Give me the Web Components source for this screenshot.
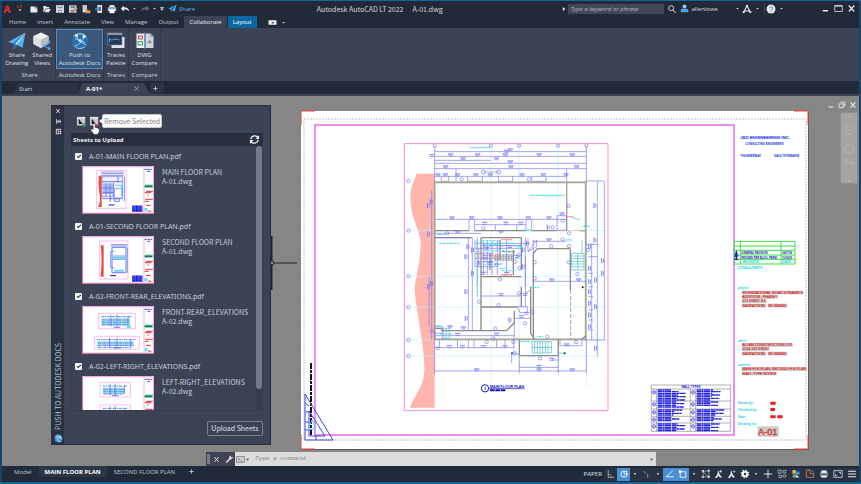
<!DOCTYPE html>
<html lang="en">
<head>
<meta charset="utf-8">
<title>Autodesk AutoCAD LT 2022</title>
<style>
  body { margin: 0; background: #212a38; color: #d3d7de; font: 6px/8px "Open Sans", "Noto Sans", sans-serif; }
</style>
</head>
<body>
<cad-app></cad-app>
<script>
const BASE = `
  :host { display: block; box-sizing: border-box; }
  *, *::before { box-sizing: border-box; }
  button { font: inherit; color: inherit; background: none; border: 0; padding: 0; margin: 0; display: flex; align-items: center; justify-content: center; white-space: nowrap; }
  svg { display: block; flex: none; }
`;
const define = (name, markup) => customElements.define(name, class extends HTMLElement {
  constructor() {
    super();
    this.attachShadow({ mode: "open" });
  }
  connectedCallback() {
    if (this.shadowRoot.childNodes.length) return;
    const t = document.createElement("template");
    t.innerHTML = `<style>${BASE}</style>` + (typeof markup === "function" ? markup(this) : markup);
    this.shadowRoot.append(t.content.cloneNode(true));
  }
});

/* ---------- icons: every one is drawn on a 36-unit square ---------- */
const W = "#e6e9ee";
const ICONS = {
  logo: `<path d="M2 32 11 5h8l9 27h-7l-2-6h-9l-2 6zM12 20h6l-3-9z" fill="#d9302c"/><path d="M15 20 28 12" stroke="#d9302c" stroke-width="2"/>`,
  lt: `<path d="M6 6v9h7M15 6h9M20 6v10" stroke="#d9302c" stroke-width="3" fill="none"/><path d="M10 22h12l-6 7z" fill="${W}"/>`,
  new: `<path d="M5 9h16v6h9v16H5z" fill="${W}"/><path d="M23 7l8 7h-8z" fill="#b9bec7"/>`,
  open: `<path d="M5 7h9l3 4h9v5H14L7 29H5z" fill="${W}"/><path d="M15 18h17l-7 12H9z" fill="${W}"/>`,
  save: `<path d="M4 4h28v28H4z" fill="${W}"/><path d="M9 5h17v10H9zM10 21h15v11H10z" fill="#7d8592"/><path d="M12 6h10v5H12zM13 24h10v6H13z" fill="#eef1f5"/>`,
  saveas: `<path d="M4 5h26v26H4z" fill="${W}"/><path d="M9 6h16v9H9zM9 21h11v10H9z" fill="#7d8592"/><path d="M17 30l2-8 11-11 5 5-11 11z" fill="#e5a26b" stroke="#333" stroke-width="1"/>`,
  cloudopen: `<path d="M6 4h15v26H6z" fill="${W}"/><path d="M10 9h7M10 14h7M10 19h7" stroke="#6d7482" stroke-width="2"/><path d="M16 20h8l3 3h7v10H16z" fill="#d39a5b"/>`,
  web: `<path d="M12 4h17v28H12z" fill="${W}"/><path d="M16 10h9v15h-9z" fill="#57606f"/><path d="M4 15h8v-5l9 8-9 8v-5H4z" fill="#3d9fe0"/>`,
  print: `<path d="M9 4h18v8H9z" fill="${W}"/><path d="M3 12h30v14H3z" fill="#cfd3da"/><path d="M9 20h18v13H9z" fill="#fff"/><path d="M3 14h30v4H3z" fill="#7cb4e0"/>`,
  undo: `<path d="M3 16 14 6v6c12 0 18 4 19 15-5-6-9-7-19-7v7z" fill="${W}"/>`,
  redo: `<path d="M33 16 22 6v6C10 12 4 16 3 27c5-6 9-7 19-7v7z" fill="#5f6877"/>`,
  dd: `<path d="M12 15h12l-6 8z" fill="${W}"/>`,
  ddbar: `<path d="M10 9h16v3H10zM10 16h16l-8 10z" fill="${W}"/>`,
  send: `<path d="M2 18 34 3 27 31 17 24l-5 8-1-11z" fill="#4aa8ee"/><path d="M11 21 34 3 17 24z" fill="#1c4f7d"/>`,
  tri: `<path d="M13 9v18l11-9z" fill="${W}"/>`,
  search: `<circle cx="15" cy="15" r="9" fill="none" stroke="${W}" stroke-width="3"/><path d="M21 22l11 10" stroke="#d6b37c" stroke-width="4"/>`,
  user: `<circle cx="18" cy="10" r="8" fill="#8cc8f4"/><path d="M3 33v-8q0-5 6-6h18q6 1 6 6v8z" fill="#4ba3e3"/>`,
  appstore: `<path d="M18 6 6 30M18 6l12 24M10 25h16" stroke="${W}" stroke-width="4" fill="none"/><circle cx="18" cy="7" r="4" fill="${W}"/><circle cx="6" cy="29" r="4" fill="${W}"/><circle cx="30" cy="29" r="4" fill="${W}"/>`,
  help: `<circle cx="18" cy="18" r="16" fill="#e8eaee"/><path d="M13 15c0-7 11-7 11 0 0 4-6 4-6 8M18 25v4" stroke="#8b919c" stroke-width="4" fill="none"/>`,
  min: `<path d="M7 24h21v6H7z" fill="${W}"/>`,
  max: `<path d="M3 6h30v24H3z" fill="none" stroke="${W}" stroke-width="3"/><path d="M3 6h30v4H3z" fill="${W}"/>`,
  restore: `<path d="M11 5h20v17h-6" fill="none" stroke="${W}" stroke-width="4"/><path d="M5 13h19v17H5z" fill="none" stroke="${W}" stroke-width="4"/>`,
  close: `<path d="M7 6l22 24M29 6 7 30" stroke="${W}" stroke-width="5"/>`,
  xthin: `<path d="M8 8l20 20M28 8 8 28" stroke="#b3b9c3" stroke-width="4"/>`,
  plus: `<path d="M18 6v24M6 18h24" stroke="#c9ced6" stroke-width="4"/>`,
  pinbar: `<path d="M8 6v24M13 18h18M20 10l-8 8 8 8" stroke="${W}" stroke-width="4" fill="none"/><path d="M27 8v20" stroke="${W}" stroke-width="3"/>`,
  cog: `<path d="M7 7h22v22H7z" stroke="${W}" stroke-width="6" stroke-dasharray="7 3" fill="none"/><circle cx="18" cy="18" r="5" fill="${W}"/>`,
  globe: `<circle cx="18" cy="18" r="16" fill="#3b8fcf"/><path d="M6 10q8 2 10 12t10 9M12 3q4 12 18 16" stroke="#cfe6f8" stroke-width="4" fill="none"/><path d="M20 6l10 6-8 2z" fill="#e8f4fd"/>`,
  refresh: `<path d="M6 17C7 5 24 2 30 12M30 19c-1 12-18 15-24 5" stroke="#eef0f4" stroke-width="4" fill="none"/><path d="M33 4v12H21zM3 32V20h12z" fill="#eef0f4"/>`,
  sheetadd: `<path d="M3 3h27v28H3z" fill="#c9cbce"/><path d="M3 3h27v6H3z" fill="#dedfe1"/><path d="M9 9v17h13z" fill="#14171c"/><path d="M21 29h12M27 23v12" stroke="#2eaa5c" stroke-width="5"/>`,
  sheetdel: `<path d="M3 3h27v28H3z" fill="#c9cbce"/><path d="M3 3h27v6H3z" fill="#dedfe1"/><path d="M9 9v17h13z" fill="#14171c"/><path d="M20 29h13" stroke="#d3354a" stroke-width="5"/>`,
  wrench: `<path d="M5 30 20 15" stroke="${W}" stroke-width="6"/><path d="M30 6l-5 5-3-3 5-5q-10-2-11 7 1 9 10 7 7-3 4-11z" fill="${W}"/>`,
  cmd: `<path d="M2 6h32v24H2z" fill="#cfd0d2" stroke="#777b84" stroke-width="3"/><path d="M8 13l6 5-6 5M17 24h9" stroke="#666" stroke-width="3" fill="none"/>`,
  dddark: `<path d="M6 13h24L18 27z" fill="#555a64"/>`,
  snap: `<path d="M8 4v26h22" stroke="#aeb4bf" stroke-width="3" fill="none"/><path d="M8 20h9v10" stroke="#aeb4bf" stroke-width="2" fill="none"/>`,
  polar: `<circle cx="18" cy="18" r="11" fill="none" stroke="#fff" stroke-width="3"/><path d="M18 18h15M18 18V9" stroke="#fff" stroke-width="3"/><circle cx="27" cy="9" r="3" fill="#fff"/>`,
  iso: `<path d="M4 8l16 12v12" stroke="#8c93a0" stroke-width="3" fill="none"/><path d="M20 20 32 30" stroke="#b4473c" stroke-width="3"/>`,
  track: `<path d="M28 6 5 28h27" stroke="#fff" stroke-width="3" fill="none"/>`,
  osnap: `<path d="M8 10h20v20H8z" stroke="#fff" stroke-width="3" fill="none"/><path d="M3 5h9v9H3z" fill="#fff"/>`,
  lwt: `<path d="M6 8l20 20M28 6v22H8V8h20" stroke="#c9ced6" stroke-width="2" fill="none"/><path d="M3 4h8v8H3zM24 24h8v8h-8zM24 3h8v6h-8zM3 25h7v7H3z" fill="#c9ced6"/>`,
  annot: `<path d="M15 4l5 15 9 12h-8l-5-7-6 8H3l9-13z" fill="${W}"/><path d="M24 4v9M20 8h9" stroke="${W}" stroke-width="3"/>`,
  annot2: `<path d="M15 4l5 15 9 12h-8l-5-7-6 8H3l9-13z" fill="${W}"/><path d="M28 3l-7 7h5l-3 6 8-8h-5z" fill="${W}"/>`,
  gear: `<circle cx="18" cy="18" r="8" fill="none" stroke="#fff" stroke-width="7"/><circle cx="18" cy="18" r="13" fill="none" stroke="#fff" stroke-width="5" stroke-dasharray="5 5.2"/>`,
  bigplus: `<path d="M18 3v30M3 18h30" stroke="#fff" stroke-width="3"/>`,
  units: `<path d="M4 4h11v11H4zM22 5h10v9H22zM7 22h10v9H7z" stroke="#aeb4bf" stroke-width="3" fill="none"/><circle cx="27" cy="25" r="5" stroke="#aeb4bf" stroke-width="3" fill="none"/>`,
  quick: `<path d="M5 4h13v13H5z" fill="#f0b93a"/><path d="M15 9h16v12H15z" fill="#3d8fe0"/><path d="M6 20h12v11H6z" fill="#67b657"/><path d="M19 21l12 10H18z" fill="#e8ecf2"/>`,
  isolate: `<path d="M5 4v26h26V17H18V4z" stroke="#c08c5c" stroke-width="3" fill="none"/><path d="M18 4h-6M31 13l-7-8" stroke="#c08c5c" stroke-width="3"/>`,
  plot: `<circle cx="18" cy="18" r="14" fill="#9aa0ab"/><path d="M9 6h18v9H9zM7 23h22v7H7z" fill="#e6e9ee"/><path d="M4 15h28v8H4z" fill="#70747e"/>`,
  clean: `<path d="M3 6h30v24H3z" stroke="#d5d9e0" stroke-width="3" fill="none"/><path d="M9 24v-6M9 24h6M27 12v6M27 12h-6" stroke="#d5d9e0" stroke-width="3"/>`,
  menu: `<path d="M4 6h28v4H4zM4 16h28v4H4zM4 26h28v4H4z" fill="#eef0f4"/>`,
  ribbonmode: `<path d="M2 9h32v18H2z" fill="#f1f3f6"/><path d="M15 16h8v6h-8z" fill="#444"/>`,
  bigshare: `<path d="M0 20 35 1 29 32 19 26l-7 9-2-12z" fill="#58b0f0"/><path d="M10 23 35 1 19 26l-7 9z" fill="#1f6aa8"/><path d="M13 24 35 1 19 26z" fill="#a8d8fa"/>`,
  bigviews: `<path d="M16 1l15 7v16L16 32 1 24V8z" fill="#f1f2f5"/><path d="M16 15v17L1 24V8z" fill="#dcdfe4"/><path d="M16 15 31 8v16l-15 8z" fill="#b9bec7"/><path d="M23 27l9-6M23 28l9 5" stroke="#4aa8ee" stroke-width="2"/><circle cx="23" cy="27" r="3" fill="#4aa8ee"/><circle cx="32" cy="20" r="3" fill="#4aa8ee"/><circle cx="32" cy="33" r="3" fill="#4aa8ee"/>`,
  bigpush: `<circle cx="18" cy="18" r="16" fill="#2a6fae"/><path d="M4 10Q18-2 32 12 30 4 20 2 8 2 4 10M3 24q10 14 26 4-4 7-12 6-10-1-14-10" fill="#8dc4ef"/><path d="M11 6q2 14 20 20M26 8Q24 22 8 28M8 13q10 6 20 8" stroke="#a5cdee" stroke-width="2" fill="none"/><circle cx="11" cy="7" r="3" fill="#fff"/><circle cx="26" cy="9" r="3" fill="#fff"/><circle cx="18" cy="17" r="3" fill="#bfe0f8"/>`,
  bigtraces: `<path d="M9 10h26v22H9z" fill="#dfe2e7"/><path d="M1 2h29v24H1z" fill="#2b3950" stroke="#5aa9e6" stroke-width="1"/><path d="M1 2h29v4H1z" fill="#8d95a3"/><path d="M5 21v-8q4 5 8 2t12 1" stroke="#5aa9e6" stroke-width="2" fill="none"/>`,
  bigcompare: `<path d="M1 3h16v29H1z" fill="#f2f3f5"/><path d="M19 3h10l6 6v23H19z" fill="#d5d7db"/><path d="M5 8h8v6H5z" fill="none" stroke="#d3354a" stroke-width="2"/><path d="M4 19h9v7H4z" fill="none" stroke="#2eaa5c" stroke-width="2"/><path d="M18 1v33" stroke="#4aa8ee" stroke-width="2"/><path d="M22 22l6-7 4 8z" fill="#8b9099"/><path d="M28 3v7h7z" fill="#9ca1ab"/>`
};
define("cad-icon", el => {
  const s = el.getAttribute("size") || 10;
  return `<style>:host{display:inline-block;flex:none}</style><svg width="${s}" height="${s}" viewBox="0 0 36 36" aria-hidden="true">${ICONS[el.getAttribute("name")]}</svg>`;
});
const icon = (n, s = 10) => `<cad-icon name="${n}" size="${s}"></cad-icon>`;
const ibtn = (n, label, s = 10, cls = "") => `<button class="${cls}" aria-label="${label}">${icon(n, s)}</button>`;

/* ---------- title bar ---------- */
define("cad-titlebar", `<style>
  :host { display: flex; justify-content: space-between; align-items: center; height: 15px; padding: 0 3px; }
  div { display: flex; align-items: center; }
  .left button { width: 13px; height: 13px; }
  .left .logo { width: 10px; } .left .lt { width: 14px; }
  .left .dd, .right .dd { width: 7px; }
  .left .share { width: auto; gap: 2px; margin-left: 3px; color: #5fb2ee; }
  .title { gap: 9px; padding-left: 4px; white-space: nowrap; font: 7px/8px "Noto Sans CJK SC", sans-serif; }
  .right button { height: 13px; width: 13px; }
  input { width: 96px; height: 10px; border: 0; border-radius: 0; padding: 0 2px; margin-right: 1px; background: #3f4859; color: #d3d7de; font: italic 6px/10px "Open Sans", sans-serif; }
  input::placeholder { color: #b4bac5; opacity: 1; }
  .right .account { width: auto; gap: 2px; margin-left: 2px; }
  .account + .dd { margin-left: 16px; }
  .help { border-left: 1px solid #3a4353; margin-left: 3px; }
  .win { margin-left: 34px; }
</style>
<div class="left">${ibtn("logo", "Application menu", 10, "logo")}${ibtn("lt", "Menu options", 9, "lt")}${
  [["new", "New"], ["open", "Open"], ["save", "Save"], ["saveas", "Save As"], ["cloudopen", "Open from Web"], ["web", "Save to Web"], ["print", "Plot"], ["undo", "Undo"]].map(a => ibtn(a[0], a[1])).join("")
}${ibtn("dd", "Undo list", 7, "dd")}${ibtn("redo", "Redo")}${ibtn("dd", "Redo list", 7, "dd")}${ibtn("ddbar", "Customize toolbar", 8, "dd")}<button class="share">${icon("send", 9)}Share</button></div>
<div class="title"><span>Autodesk AutoCAD LT 2022</span><span>A-01.dwg</span></div>
<div class="right">${icon("tri", 8)}<input aria-label="Search" placeholder="Type a keyword or phrase">${ibtn("search", "Search")}<button class="account">${icon("user", 9)}allenlowe</button>${ibtn("dd", "Account menu", 7, "dd")}${ibtn("appstore", "App Store")}${ibtn("dd", "App menu", 7, "dd")}<div class="help">${ibtn("help", "Help")}</div>${ibtn("dd", "Help menu", 7, "dd")}<div class="win">${ibtn("min", "Minimize", 9)}${ibtn("max", "Maximize", 9)}${ibtn("close", "Close", 9)}</div></div>`);

/* ---------- ribbon tabs ---------- */
define("ribbon-tabs", `<style>
  :host { display: flex; align-items: stretch; height: 12px; padding-left: 4px; color: #c3c8d1; }
  nav { display: flex; gap: 1px; }
  button { padding: 0 5px; }
  .on { background: #3c4356; color: #eceef2; }
  .ctx { background: #0b68a3; color: #fff; margin-right: 9px; }
  .mode { padding: 0; width: 14px; }
  .dd { padding: 0; }
</style><nav>${["Home", "Insert", "Annotate", "View", "Manage", "Output"].map(t => `<button>${t}</button>`).join("")}<button class="on">Collaborate</button><button class="ctx">Layout</button></nav>${ibtn("ribbonmode", "Ribbon display", 9, "mode")}${ibtn("dd", "Ribbon options", 7, "dd")}`);

/* ---------- ribbon ---------- */
define("ribbon-button", el => `<style>
  button { flex-direction: column; justify-content: flex-start; width: 100%; height: 40px; padding: 2px 0 0; gap: 1px; line-height: 8px; color: #dfe2e8; border: 1px solid transparent; text-align: center; }
  :host([active]) button { background: #3a587c; border-color: #5590bf; }
</style><button>${icon(el.getAttribute("icon"), 18)}<span><slot></slot></span></button>`);
define("ribbon-panel", el => `<style>
  :host { display: flex; flex-direction: column; justify-content: space-between; border-right: 1px solid #30374a; padding: 1px 0 0; }
  div { display: flex; } h2 { margin: 0; font: inherit; text-align: center; line-height: 11px; white-space: nowrap; color: #d3d7de; }
  ::slotted(*) { flex: 1; }
</style><div><slot></slot></div><h2>${el.getAttribute("label")}</h2>`);
define("cad-ribbon", `<style>
  :host { display: flex; height: 53px; background: #3c4356; margin: 0 2px; padding-left: 2px; }
  .a { width: 52px; } .b { width: 48px; } .c { width: 25px; } .d { width: 32px; }
</style>
<ribbon-panel class="a" label="Share"><ribbon-button icon="bigshare">Share<br>Drawing</ribbon-button><ribbon-button icon="bigviews">Shared<br>Views</ribbon-button></ribbon-panel>
<ribbon-panel class="b" label="Autodesk Docs"><ribbon-button icon="bigpush" active>Push to<br>Autodesk Docs</ribbon-button></ribbon-panel>
<ribbon-panel class="c" label="Traces"><ribbon-button icon="bigtraces">Traces<br>Palette</ribbon-button></ribbon-panel>
<ribbon-panel class="d" label="Compare"><ribbon-button icon="bigcompare">DWG<br>Compare</ribbon-button></ribbon-panel>`);

/* ---------- document tabs ---------- */
define("document-tabs", `<style>
  :host { display: flex; height: 15px; padding: 2px 12px 0; border-bottom: 2px solid #3c4356; }
  button { padding: 0; }
  .tab { justify-content: flex-start; width: 66px; padding-left: 7px; background: #2b3443; clip-path: polygon(6px 0, 100% 0, 100% 100%, 0 100%); }
  .on { display: flex; align-items: center; justify-content: space-between; width: 72px; padding: 0 10px 0 8px; background: #3c4356; color: #fff; font-weight: 700; clip-path: polygon(4px 0, 66px 0, 72px 100%, 0 100%); }
  .add { width: 14px; padding-right: 4px; background: #2b3443; border-radius: 0 0 4px 0; }
</style><button class="tab">Start</button><div class="on"><button>A-01*</button>${ibtn("xthin", "Close A-01", 7)}</div>${ibtn("plus", "New tab", 7, "add")}`);

/* ---------- sheet thumbnails, 216 x 144 units ---------- */
const side = `<path d="M186 3v138" stroke="#f08be0" stroke-width="2"/><path d="M188 10h22M196 16h10" stroke="#3b52e8" stroke-width="3" stroke-dasharray="8 1"/><path d="M188 56h24v9h-24z" fill="#3fcf5a"/><path d="M188 61h22" stroke="#1d4fa0" stroke-width="3"/><path d="M188 80h20M192 76h20M198 85v4M190 100h22M188 106h12M192 118h14" stroke="#f0302c" stroke-width="3"/><path d="M188 126h8v10h-8z" fill="#53e3ef"/><path d="M198 134h10v3h-10z" fill="#f0302c"/>`;
const notes = `<path d="M150 118h32v20h-32z" fill="#5b62ee"/><path d="M152 123h28M152 129h28M152 134h28M164 119v18" stroke="#1515c8" stroke-width="3" stroke-dasharray="7 2"/>`;
const elev = (x, y, w, h) => `<path d="M${x} ${y}h${w}v${h}h${-w}z" fill="#fff" stroke="#f59be6" stroke-width="2"/><path d="M${x + 8} ${y + 15}h${w - 24}v${h - 24}h${24 - w}z" fill="#9fdff0"/><path d="M${x + 8} ${y + 10}h${w - 18}M${x + 10} ${y + 20}h${w - 28}M${x + 10} ${y + 27}h${w - 28}M${x + 10} ${y + 34}h${w - 34}" stroke="#5a86e0" stroke-width="3" stroke-dasharray="9 2 3 2"/><path d="M${x + w / 3} ${y + 4}v${h - 10}M${x + w / 2} ${y + 3}v${h - 8}M${x + w * .8} ${y + 8}v${h - 16}" stroke="#5c64e8" stroke-width="2"/><path d="M${x + w / 2 - 10} ${y + h - 4}h20" stroke="#3038d8" stroke-width="2"/>`;
const THUMB = {
  main: `<path d="M44 13h88v114H44z" fill="none" stroke="#f59be6" stroke-width="2"/><path d="M50 29h9v94H48q10-18 4-40-4-30-2-54z" fill="#f04a3e"/><path d="M57 18h68M57 23h68M57 28h68M127 32v74" stroke="#8f93f2" stroke-width="3"/><path d="M60 32h62v60H60z" fill="#eef2ff" stroke="#6c72cc" stroke-width="2"/><path d="M62 52h30v32H62z" fill="#a9c0f6"/><path d="M60 47h62M72 52v40M84 52v40M94 50v44M62 66h32M62 80h32M108 32v18M60 98h62M85 93v14M98 98h14v8H98z" stroke="#6f7ae6" stroke-width="3" fill="none"/><path d="M97 68h24v28H97z" fill="#fff" stroke="#6f7ae6" stroke-width="2"/><path d="M99 58h22v8M118 60v30M72 60h14" stroke="#61d6ea" stroke-width="3" fill="none"/><path d="M80 117h18" stroke="#1515c8" stroke-width="3"/>` + notes,
  second: `<path d="M52 15h86v114H52z" fill="none" stroke="#f59be6" stroke-width="2"/><path d="M56 28h9v94h-9q5-50 0-94z" fill="#f04a3e"/><path d="M90 34h42v76H90z" fill="#fff" stroke="#6f7ae6" stroke-width="3"/><path d="M90 60h42M90 70h42M98 46h-12v50h12M86 26h50M86 30h50M136 34v76" stroke="#7f9bef" stroke-width="3" fill="none"/><path d="M92 65h38M96 104h30" stroke="#71cfe8" stroke-width="6"/><path d="M84 119h18" stroke="#1515c8" stroke-width="3"/>` + notes,
  front: elev(50, 22, 110, 46) + elev(38, 91, 134, 39) + `<path d="M134 58h12v8h-12z" fill="#53e3ef"/>`,
  left: elev(54, 20, 91, 43) + elev(54, 87, 91, 43)
};
define("sheet-thumb", el => `<style>:host{width:72px;flex:none}</style><svg width="72" height="48" viewBox="0 0 216 144" role="img" aria-label="Sheet preview"><path d="M0 0h216v144H0z" fill="#fff"/><path d="M2 2h212v140H2z" fill="none" stroke="#f29ae0" stroke-width="3"/><path d="M1 1v142M1 142h216" stroke="#b25c6c" stroke-width="2"/>${side}${THUMB[el.getAttribute("kind")]}</svg>`);

define("sheet-item", el => `<style>
  :host { display: block; height: 70px; flex: none; padding-left: 2px; color: #c8cdd7; font: 7px/9px "Noto Sans", "Open Sans", sans-serif; }
  label { display: flex; align-items: center; gap: 7px; height: 16px; white-space: nowrap; }
  input { appearance: none; width: 7px; height: 7px; margin: 0; background: #f4f5f7; border-radius: 1px; display: grid; place-items: center; }
  input:checked::before { content: ""; width: 4px; height: 2px; border-left: 1px solid #222; border-bottom: 1px solid #222; transform: rotate(-45deg); }
  .row { display: flex; gap: 8px; padding: 2px 0 0 7px; }
  .meta { font: 7px/9px "Noto Sans CJK SC", sans-serif; padding-top: 2px; white-space: nowrap; }
  p { margin: 0; }
</style><label><input type="checkbox" checked><span>${el.getAttribute("file")}</span></label>
<div class="row"><sheet-thumb kind="${el.getAttribute("kind")}"></sheet-thumb><div class="meta"><p>${el.getAttribute("sheet")}</p><p>${el.getAttribute("dwg")}</p></div></div>`);

/* ---------- upload palette ---------- */
define("upload-palette", `<style>
  :host { display: flex; width: 220px; flex: none; background: #3c4356; border: 1px solid #2a3040; position: relative; font: 7px/9px "Noto Sans CJK SC", sans-serif; }
  .grip { display: flex; flex-direction: column; align-items: center; gap: 2px; width: 12px; background: #2a3142; padding: 1px 0; }
  .grip button { width: 9px; height: 8px; }
  .grip span { writing-mode: vertical-rl; transform: rotate(180deg); margin-top: auto; margin-bottom: 2px; color: #bac0ca; }
  .body { flex: 1; min-width: 0; display: flex; flex-direction: column; padding: 0 7px 8px; }
  .tools { display: flex; align-items: center; gap: 2px; height: 27px; padding: 4px 0 0 5px; }
  header { display: flex; justify-content: space-between; align-items: center; height: 13px; background: #292f3f; padding: 0 3px 0 2px; font: 700 6px/8px "Open Sans", sans-serif; color: #f0f2f5; }
  .scroll { flex: 1; min-height: 0; display: flex; justify-content: space-between; border: solid #353c4e; border-width: 0 1px 1px; margin-bottom: 10px; }
  .list { display: flex; flex-direction: column; overflow: hidden; padding: 2px 0 0 1px; }
  .bar { width: 6px; background: #353c4e; } .bar i { display: block; height: 92%; border-radius: 3px; background: #717b8d; }
  .upload { align-self: flex-end; width: 56px; height: 15px; border: 1px solid #79818f; border-radius: 2px; color: #dfe2e8; }
  .tip { position: absolute; left: 50px; top: 8px; height: 14px; padding: 0 1px; background: #fbfbfb; border: 1px solid #c9c9cc; border-radius: 2px; color: #86888e; line-height: 12px; white-space: nowrap; }
  .tip::before { content: ""; position: absolute; left: -4px; top: 3px; border: 3px solid transparent; border-left: 0; border-right: 4px solid #fbfbfb; }
  .hand { position: absolute; left: 38px; top: 17px; }
</style>
<div class="grip">${ibtn("close", "Close palette", 6)}${ibtn("pinbar", "Auto-hide", 7)}${ibtn("cog", "Properties", 7)}<span>PUSH TO AUTODESK DOCS</span>${icon("globe", 9)}</div>
<div class="body">
  <div class="tools">${ibtn("sheetadd", "Add Sheets", 11)}${ibtn("sheetdel", "Remove Selected", 11)}</div>
  <header><span>Sheets to Upload</span>${ibtn("refresh", "Refresh", 11)}</header>
  <div class="scroll"><div class="list">
    <sheet-item kind="main" file="A-01-MAIN FLOOR PLAN.pdf" sheet="MAIN FLOOR PLAN" dwg="A-01.dwg"></sheet-item>
    <sheet-item kind="second" file="A-01-SECOND FLOOR PLAN.pdf" sheet="SECOND FLOOR PLAN" dwg="A-01.dwg"></sheet-item>
    <sheet-item kind="front" file="A-02-FRONT-REAR_ELEVATIONS.pdf" sheet="FRONT-REAR_ELEVATIONS" dwg="A-02.dwg"></sheet-item>
    <sheet-item kind="left" file="A-02-LEFT-RIGHT_ELEVATIONS.pdf" sheet="LEFT-RIGHT_ELEVATIONS" dwg="A-02.dwg"></sheet-item>
  </div><div class="bar"><i></i></div></div>
  <button class="upload">Upload Sheets</button>
</div>
<div class="tip" role="tooltip">Remove Selected</div>
<svg class="hand" width="10" height="12" viewBox="0 0 30 36"><path d="M10 2q4-2 5 2v10q10 0 12 5v7l-4 8H12L3 21q0-4 4-3l3 3z" fill="#fff" stroke="#555" stroke-width="1"/></svg>`);

/* ---------- floor plan, 645 x 825 units ---------- */
const B = "#7478f0", C = "#4fdcf0";
const p = (d, c, w, x = "") => `<path d="${d}" fill="none" stroke="${c}" stroke-width="${w}" ${x}/>`;
const tag = (x, y, c = B) => `<path d="M${x - 8} ${y - 5}h16v4h-16zM${x - 6} ${y + 1}h12v3h-12z" fill="${c}" opacity=".75"/>`;
const vtag = (x, y) => `<path d="M${x - 5} ${y - 8}v16h4v-16zM${x + 1} ${y - 6}v12h3v-12z" fill="${B}" opacity=".75"/>`;
const dot = (x, y, r = 5) => `<circle cx="${x}" cy="${y}" r="${r}" fill="none" stroke="${B}" stroke-width="2"/>`;
const many = (list, f) => list.map(a => f(...a)).join("");
const PLAN = `
<path d="M50 101H104V803H30C42 765 76 740 73 680C72 600 44 500 44 440C50 400 62 360 62 310C60 260 30 240 31 165C33 135 44 120 50 101Z" fill="#ffb5ac"/>
${p("M273 10V740M357 10V690M474 10V700M559 20V740M20 272H620M20 409H620M20 501H620M20 599H620M20 648H600", "#bdf1fa", 2)}
${p("M104 35H559M104 49H559M104 61H273M104 70H559M104 86H559M104 109H500M168 86V125M104 20V125M559 20V125M500 86V125", B, 2)}
${p("M124 109v15h22v-15M203 109v15h44v-15M295 109v15h43v-15M395 109v15h43v-15M250 96h46", "#7a80c8", 2)}
${p("M104 127H557V598H104Z", "#93938c", 5)}${p("M104 127H557V598H104Z", "#d8d8cc", 1)}
${p("M104 272H207M224 272H378M395 272H470M540 272H557M104 293H215M243 293H364M500 127V272M400 590V340L412 326H511M511 326V450M243 293V572M243 410H364M364 293V390M364 440V500M243 501H352M125 572H320L343 548V512M125 572V565H104M392 440V580L404 598M358 598V647H475V598M545 598L557 588M270 340v50M300 300v60M340 330v75", "#8c8c86", 4)}
${p("M512 450V598", "#777", 2, 'stroke-dasharray="12 6"')}${p("M500 127V272M474 272H557", "#c7c28e", 2)}
${p("M104 238H499M207 238V272M224 238V272M378 238V272M395 238V272M224 254H378M286 254V272M350 254V272M104 280H243M104 293H215M471 227h28v44h-28zM205 293V572M217 293V572M232 293V440M376 293V500M95 150V600M87 410V560", B, 2)}
${p("M592 125V650M613 125V600M557 123H613M557 313H592M557 600H613M575 310V600M565 350H592M565 400H580M565 440H580M565 470H580M565 510H580M565 540H580M565 570H580M397 424H557M397 304H499M243 468H364M104 587H343M104 572V598M343 548V598", B, 2)}
${p("M104 693H559M104 600V700M559 600V700M358 682H475M358 647V700M475 647V700M118 600v23h30M148 623H345M172 600v23M205 600v23M222 600v23M290 600v23M315 600v23M341 600v23M480 600v17h66V600M345 642h13M475 660h-20M335 640V670", B, 2)}
${p("M225 310H390M225 325H364M225 340H280M225 355H300M225 380H285M250 300V405M262 300V405M276 300V405M292 300V405M320 293V400M225 300V380M384 295V335L410 320V300L384 335M400 300V345M376 460L392 450M352 500h30v18h-22zM346 535h44M104 560h25v20h-25M128 565v35M376 350V440", B, 2)}
${p("M248 317H364M248 346H280M248 365H280M305 335H345", "#6f8cf4", 4, 'stroke-dasharray="9 2 4 3"')}${p("M246 302H300M250 332H320M250 373H290M305 392H350M345 355H364", "#6fe0f2", 4, 'stroke-dasharray="8 3"')}
${p("M283 355h56M283 350h56M283 360h56M283 345h56M286 342v22M294 342v22M302 342v22M310 342v22M318 342v22M326 342v22M334 342v22", "#8b9097", 2)}
${p("M514 340h38v50h-38zM514 348h38M514 356h38M514 364h38M514 372h38M514 380h38M533 340V390M396 605h58v34h-58zM404 605v34M412 605v34M420 605v34M428 605v34M436 605v34M444 605v34M396 622h58M515 232l25 8M546 300v40M128 565h20v30h-20M138 565v30M120 582h40", "#43bfca", 2)}
${p("M210 23H270M118 310H180M390 166H495M110 283H135M250 312H300M305 310H345M282 372H308M550 258h20M498 300h16M372 270h25M108 558h14M360 605h30M392 442h25M478 640h20M232 300V470M410 590H430M350 320h20M300 385h20", C, 4, 'stroke-dasharray="5 2 3 1"')}
${p("M303 299h36M303 405h36M236 325v50M270 348h24M500 230h18M76 440v4M90 460v4", "#ff8080", 4, 'stroke-dasharray="5 2"')}
${many([[152,45],[233,45],[316,45],[417,45],[517,45],[189,57],[289,57],[331,66],[137,81],[333,81],[530,81],[114,105],[136,105],[173,105],[227,105],[271,105],[366,105],[430,105],[498,105],[96,47],[320,34],[331,30],[156,234],[300,234],[447,234],[254,250],[318,250],[363,250],[215,234],[385,234],[486,222],[173,276],[303,276],[447,300],[536,420],[455,420],[303,464],[173,583],[290,583],[230,690],[417,690],[517,690],[417,679],[148,620],[187,620],[250,620],[315,620],[113,625],[190,564],[150,561],[455,658],[375,464],[365,530],[260,325],[330,320],[350,350],[270,370],[320,400],[250,400],[255,355],[380,520],[500,615]], tag)}
${many([[85,197],[86,282],[94,186],[585,197],[585,300],[608,362],[198,350],[204,320],[218,330],[198,455],[199,535],[218,400],[237,370],[370,330],[370,380],[95,430],[86,440],[608,400],[587,420],[587,500],[587,625],[569,320],[569,385],[569,425],[569,455],[569,490],[569,525],[569,560],[345,640],[445,262],[330,540],[382,310]], vtag)}
${many([[104,17],[273,17],[357,17],[474,17],[559,17],[25,123],[25,272],[25,409],[25,501],[25,600],[25,648],[250,96,6],[296,96,6],[185,118],[387,118],[505,198],[488,243],[458,262],[507,280],[507,318],[507,367],[488,298],[454,319],[564,330],[142,280],[250,265],[404,367],[404,415],[300,418],[357,460],[296,495],[237,485],[397,516],[286,566],[260,606],[280,596],[528,606],[442,590],[340,606],[356,345],[358,385],[532,402],[420,655],[375,550],[290,375],[345,365],[95,573]], dot)}
<circle cx="336" cy="640" r="3" fill="#333"/><circle cx="494" cy="640" r="3" fill="#333"/><circle cx="548" cy="442" r="3" fill="#222"/>
${p("M13 11H624V812H13Z", "#f58ad6", 3)}
<circle cx="255" cy="745" r="11" fill="#fff" stroke="#2020c8" stroke-width="3"/>
<text x="255" y="749" text-anchor="middle" font-size="12" font-weight="700" fill="#2020c8">1</text>
<text x="270" y="743" font-size="11" font-weight="700" fill="#1212b8">MAIN FLOOR PLAN</text>
${p("M266 746H374", "#1212b8", 2)}${p("M270 751H316", "#1212b8", 6, 'stroke-dasharray="14 2"')}`;

/* ---------- title block, 693 x 1050 units from the sheet's top right ---------- */
const red = (x, y, t, w) => `<path d="M${x - 1} ${y - 9}h${w}v11h${-w}z" fill="#c9c9c9"/><text x="${x}" y="${y}" font-size="11" fill="#e0281e" stroke="#e0281e" stroke-width=".4">${t}</text>`;
const cy = (x, y, t) => `<text x="${x}" y="${y}" font-size="10" font-weight="700" font-style="italic" fill="#12cfe6">${t}</text>`;
const noteRows = (() => {
  const ys = [[328, 362], [364, 386], [388, 408], [410, 428], [430, 454]];
  let s = "";
  ys.forEach(([a, b], i) => [66, 183].forEach((x, j) => {
    s += `<circle cx="${x + 6}" cy="${a + 9}" r="5" fill="none" stroke="#3838e0" stroke-width="2"/><path d="M${x - 1} ${a + 9}h14M${x + 6} ${a + 2}v14" stroke="#3838e0"/>`;
    for (let y = a + 2, k = 0; y < b - 1 && (j === 0 || i !== 1 || k < 3); y += 5, k++) s += `<path d="M${x + 17} ${y}h${40 + (k * 23 + i * 17 + j * 9) % 48}" stroke="#2626dd" stroke-width="4" stroke-dasharray="13 1 7 1 19 2"/>`;
  }));
  return s;
})();
const BLOCK = `
<g fill="#1736f0">
<text x="331" y="118" font-size="13" stroke="#1736f0" stroke-width=".6">J&amp;D ENGINEERING INC.</text>
<text x="346" y="136" font-size="9" font-weight="700">CONSULTING ENGINEERS</text>
<text x="331" y="172" font-size="9" font-weight="700">THUNDERBAY</text>
<text x="432" y="172" font-size="9" font-weight="700">SAULTSTEMARIE</text></g>
${p("M313 424H495V492H313ZM313 438H495M313 451H495M313 465H495M313 478H495M331 424V492M453 424V492", "#3fe04f", 3)}
<path d="M319 452v28M313 468h12M313 478h12" stroke="#1515b8" stroke-width="4"/><circle cx="319" cy="462" r="4" fill="#1515b8"/>
<g font-size="8" font-weight="700" fill="#1212a8"><text x="334" y="463">GENERAL REVISION</text><text x="334" y="477">REVISED PER BLDG. PERM.</text><text x="456" y="463">04/27/06</text><text x="456" y="477">11/09/05</text></g>
${cy(338, 489, "REVISION")}${cy(456, 489, "DATE")}${cy(323, 507, "CONSULTANTS")}
${cy(323, 568, "project")}${red(337, 581, "INTERNATIONAL ROAD DYNAMICS", 182)}${red(337, 594, "ADDITION - PHASE I", 106)}${red(337, 607, "121 FIRST ST.", 74)}${red(337, 620, "SASKATOON,", 72)}${red(414, 620, "SK 000000", 58)}
${cy(323, 725, "client")}${red(337, 738, "ALLAN CONSTRUCTION LTD", 152)}${red(337, 751, "1124 1ST FIRST", 80)}${red(337, 764, "SASKATOON,", 72)}${red(414, 764, "SK 000000", 58)}
${cy(323, 798, "content")}${red(337, 811, "MAIN FLR PLAN, SECOND FLR PLAN,", 191)}${red(337, 824, "WALL TYPE NOTES", 104)}
${cy(323, 913, "Drawn by:")}${cy(323, 933, "Checked by:")}${cy(323, 955, "Date:")}${cy(323, 976, "Drawing no:")}
<path d="M421 905h16v9h-16zM421 924h14v9h-14zM421 946h16v9h-16zM442 946h16v9h-16z" fill="#e82020"/>
<path d="M383 979h63v31h-63z" fill="#c9c9c9"/><text x="385" y="1005" font-size="27" fill="#d2342a" stroke="#d2342a" stroke-width="1">A-01</text>
<g transform="translate(0 540)">${p("M64 315H301V454H64ZM64 327H301M64 363H301M64 387H301M64 409H301M64 429H301M80 327V454M181 327V454M197 327V454", "#8a8a90", 2)}${noteRows}<text x="183" y="325" text-anchor="middle" font-size="9" font-weight="700" fill="#2626dd">WALL TYPES</text></g>`;

define("sheet-canvas", `<style>:host{flex:1;min-width:0} .sheet{width:100%;height:auto}</style>
<svg class="sheet" viewBox="300 96 509 356" role="img" aria-label="Main floor plan sheet" font-family="Liberation Sans, sans-serif">
<path d="M302 112H809V450H302Z" fill="#5d5d5d"/><path d="M301 111H808V449H301Z" fill="#fff"/>
<path d="M301 125V111H315M794 111H808V125M301 435V449H315M794 449H808V435" fill="none" stroke="#e8453c"/>
<path d="M304 119H806V440H304Z" fill="none" stroke="#c2c2c2" stroke-dasharray="2 1"/>
<path d="M315 125H734V435H315Z" fill="none" stroke="#f08cf0" stroke-width="2"/>
<path d="M311 363V436" stroke="#111" stroke-width="2" stroke-dasharray="6 1 3 1"/>
<path d="M305 394V440H333ZM309 411V436H325ZM305 403l4 3M305 412h4M305 422h4M305 430h6M316 440v-5" fill="none" stroke="#3a48e0"/>
<path d="M312 420l4 8-8 2z" fill="none" stroke="#55cfe8"/>
<svg x="400" y="140" width="215" height="275" viewBox="0 0 645 825">${PLAN}</svg>
<svg x="630" y="100" width="231" height="350" viewBox="0 0 693 1050">${BLOCK}</svg>
</svg>`);

/* ---------- command line ---------- */
define("command-line", `<style>
  :host { display: flex; height: 14px; margin: 0 203px 0 204px; background: #dcdcdd; color: #777; }
  .tools { display: flex; align-items: center; width: 29px; background: #3f4353; padding-left: 1px; gap: 1px; }
  .tools i { width: 3px; height: 10px; background: #767a86; } .tools button { flex: 1; }
  button { width: 9px; }
  .prompt { width: 16px; }
  input { flex: 1; min-width: 0; border: 0; background: none; padding: 0 4px; font: italic 6px/14px "Liberation Mono", monospace; color: #555; }
  input::placeholder { color: #8a8a8c; opacity: 1; }
</style><div class="tools"><i></i>${ibtn("close", "Close", 7)}${ibtn("wrench", "Customize", 9)}</div><button class="prompt" aria-label="Recent commands">${icon("cmd", 9)}${icon("dddark", 5)}</button><input aria-label="Command" placeholder="Type a command">${ibtn("dddark", "History", 5)}`);

/* ---------- drawing workspace ---------- */
define("cad-workspace", `<style>
  :host { display: flex; flex-direction: column; flex: 1; min-height: 0; margin: 0 2px; background: #868686; }
  .main { display: flex; flex: 1; min-height: 0; padding-left: 49px; }
  upload-palette { margin: 9px 0 7px; }
  .leader { width: 29px; flex: none; display: flex; align-items: center; padding-bottom: 22px; }
  sheet-canvas { align-self: flex-start; }
  .nav { width: 50px; flex: none; display: flex; flex-direction: column; align-items: flex-end; padding-top: 4px; gap: 2px; }
  .win { display: flex; gap: 1px; padding-right: 1px; } .win button { width: 10px; height: 10px; }
  .wheel { width: 18px; margin-right: 1px; border: 1px solid #8f8f8f; border-radius: 2px; background: #a3a3a4; }
</style>
<div class="main"><upload-palette></upload-palette>
<div class="leader"><svg width="27" height="54" viewBox="0 0 27 54"><path d="M0 0v54" stroke="#1c2230" stroke-width="3"/><path d="M1 27h25" stroke="#222"/><circle cx="1" cy="27" r="2" fill="#888" stroke="#222"/></svg></div>
<sheet-canvas></sheet-canvas>
<div class="nav"><div class="win">${ibtn("min", "Minimize drawing", 8)}${ibtn("restore", "Restore drawing", 8)}${ibtn("close", "Close drawing", 8)}</div>
<button class="wheel" aria-label="Navigation bar"><svg width="16" height="70" viewBox="0 0 48 210"><g fill="none" stroke="#b9b9ba" stroke-width="2"><path d="M19 6l10 8M29 6l-10 8"/><path d="M8 48q16-16 32 0M8 56q16 14 32 0M12 52h24M17 64h14"/><circle cx="24" cy="108" r="13"/><path d="M24 90v8M24 118v8M6 108h8M34 108h8M12 136l26 24M38 136l-26 24"/><circle cx="13" cy="145" r="4"/><circle cx="36" cy="150" r="4"/></g><path d="M20 202h8l-4 5z" fill="#c4c4c4"/></svg></button></div></div>
<command-line></command-line>`);

/* ---------- status bar ---------- */
const st = (n, l, c = "", s = 10) => ibtn(n, l, s, c);
define("status-bar", `<style>
  :host { display: flex; justify-content: space-between; height: 16px; padding: 0 3px 0 8px; color: #c2c7d0; }
  nav, .tools { display: flex; align-items: center; }
  nav { align-self: flex-start; gap: 1px; }
  nav button { height: 11px; padding: 0 6px; }
  nav .on { background: #2d3647; color: #fff; font-weight: 700; }
  .tools button { width: 13px; height: 13px; background: #2a3343; }
  .tools .dd { width: 10px; } .tools .w { width: 14px; }
  .tools .on { background: #4a8fd4; }
  .tools .paper { width: auto; background: none; padding-right: 2px; font-weight: 600; }
</style>
<nav><button>Model</button><button class="on">MAIN FLOOR PLAN</button><button>SECOND FLOOR PLAN</button>${ibtn("plus", "New layout", 7)}</nav>
<div class="tools"><button class="paper">PAPER</button>${st("snap", "Ortho")}${st("polar", "Polar tracking", "on")}${st("dd", "Polar options", "dd", 8)}${st("iso", "Isometric")}${st("dd", "Isometric options", "dd", 8)}${st("track", "Object snap tracking", "on")}${st("osnap", "Object snap", "on")}${st("dd", "Snap options", "dd", 8)}${st("lwt", "Selection")}${st("annot", "Annotation visibility")}${st("annot2", "Auto scale")}${st("gear", "Workspace")}${st("dd", "Workspace options", "dd", 8)}${st("bigplus", "Annotation monitor", "w")}${st("units", "Units", "w")}${st("quick", "Quick properties", "w")}${st("isolate", "Isolate objects", "w")}${st("plot", "Hardware", "w")}${st("clean", "Clean screen", "w")}${st("menu", "Customization")}</div>`);

/* ---------- application frame ---------- */
define("cad-app", `<style>
  :host { display: flex; flex-direction: column; height: 100vh; border: solid #14669a; border-width: 1px 0 2px; background: #212a38; box-shadow: inset 2px 0 #184567, inset -2px 0 #184567; }
</style><cad-titlebar></cad-titlebar><ribbon-tabs></ribbon-tabs><cad-ribbon></cad-ribbon><document-tabs></document-tabs><cad-workspace></cad-workspace><status-bar></status-bar>`);
</script>
</body>
</html>
